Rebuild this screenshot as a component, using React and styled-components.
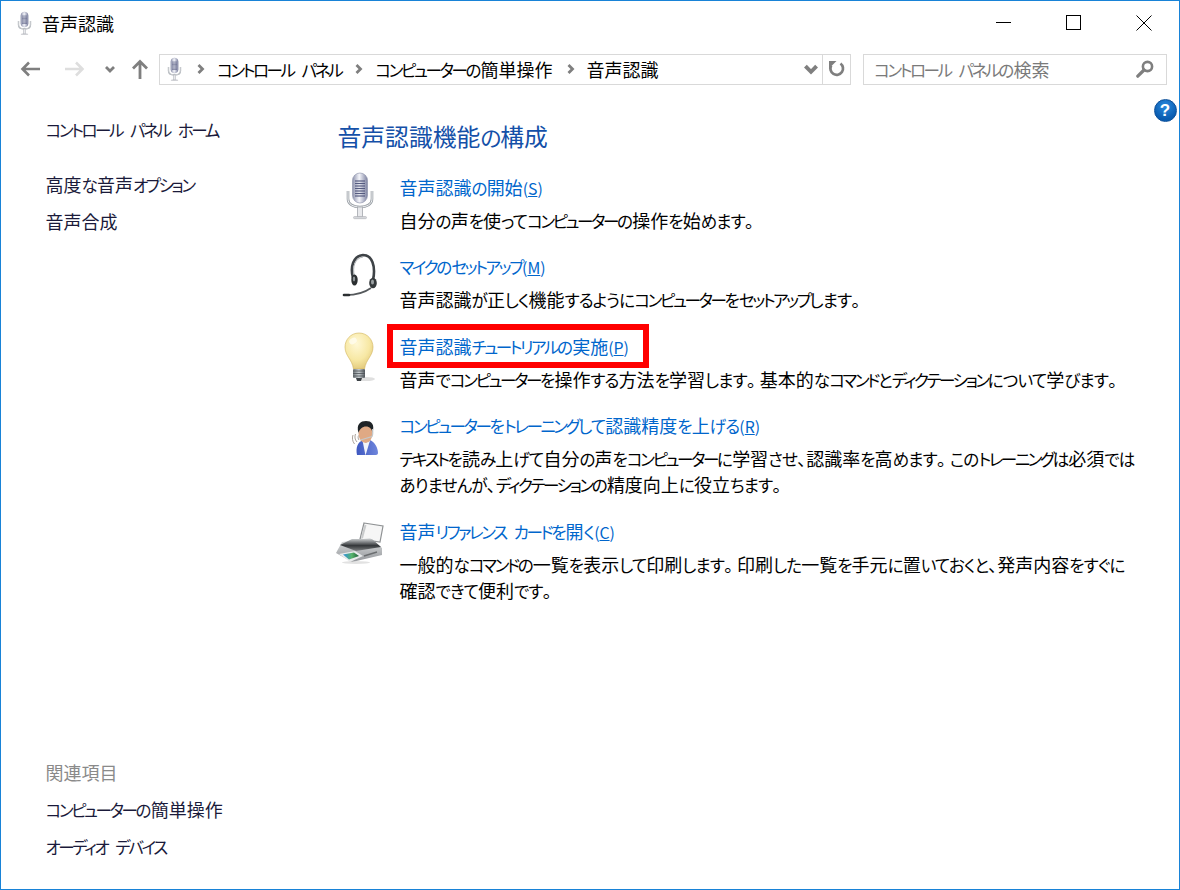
import styled, { createGlobalStyle } from "styled-components";

const GlobalStyle = createGlobalStyle`
  html, body {
    margin: 0;
    height: 100%;
    background: #fff;
  }
  #root {
    height: 100%;
  }
  * {
    box-sizing: border-box;
  }
`;

const Window = styled.div`
  width: 1180px;
  height: 890px;
  border: 1.5px solid #1883d7;
  display: flex;
  flex-direction: column;
  position: relative;
  background: #fff;
  color: #000;
  font-family: "Noto Sans CJK JP", "Noto Sans", sans-serif;
  font-feature-settings: "palt";
  font-size: 18px;
  line-height: 26px;
  overflow: hidden;
`;

/* kana in the reference font are much narrower than the kanji */
const Kana = styled.span`
  font-size: 0.92em;
  line-height: 1;
  letter-spacing: ${(p) => (p.$kata ? "-0.145em" : "-0.05em")};
  word-spacing: 0.4em;
`;

const Stop = styled.span`
  margin-right: 4px;
`;

const Jp = ({ children }) =>
  children.split(/([\u3040-\u309f]+|[\u30a0-\u30ff ]+|。)/).map((run, i) => {
    if (i % 2 === 0) return run;
    if (run === "。") return <Stop key={i}>{run}</Stop>;
    return (
      <Kana key={i} $kata={/[\u30a0-\u30ff]/.test(run)}>
        {run}
      </Kana>
    );
  });

const TitleBar = styled.div`
  height: 44px;
  display: flex;
  align-items: center;
  padding-left: 15px;
  gap: 9px;
`;

const TitleText = styled.div`
  flex: 1;
`;

const WinButtons = styled.div`
  display: flex;
  align-items: center;
`;

const WinButton = styled.button`
  width: 70px;
  height: 44px;
  border: 0;
  padding: 0;
  background: transparent;
  display: flex;
  align-items: center;
  justify-content: center;
`;

const Toolbar = styled.div`
  height: 32px;
  margin-top: 8px;
  display: flex;
  align-items: center;
  padding-left: 18px;
`;

const NavButton = styled.button`
  width: ${(p) => p.$w}px;
  height: 30px;
  margin-left: ${(p) => p.$left || 0}px;
  border: 0;
  padding: 0;
  background: transparent;
  display: flex;
  align-items: center;
  justify-content: center;
`;

const AddressBar = styled.div`
  width: 692px;
  height: 31px;
  margin-left: 2px;
  border: 1.5px solid #d9d9d9;
  display: flex;
  align-items: center;
  padding-left: 6px;
`;

const Crumbs = styled.div`
  flex: 1;
  display: flex;
  align-items: center;
  margin-left: 13px;
`;

const Crumb = styled.span`
  margin: 0 13px 0 11px;
  white-space: nowrap;
`;

const AddressEnd = styled.div`
  width: 28px;
  height: 100%;
  border-left: 1.5px solid #d9d9d9;
  display: flex;
  align-items: center;
  justify-content: center;
`;

const DropButton = styled.div`
  width: 22px;
  display: flex;
  justify-content: center;
`;

const SearchBox = styled.div`
  width: 304px;
  height: 31px;
  margin-left: 12px;
  border: 1.5px solid #d9d9d9;
  display: flex;
  align-items: center;
  justify-content: space-between;
  padding: 0 12px 0 10px;
  color: #7a7a7a;
`;

const HelpBadge = styled.div`
  position: absolute;
  top: 97.5px;
  right: 2.5px;
  width: 23px;
  height: 23px;
  border-radius: 50%;
  background: radial-gradient(circle at 50% 30%, #2a8ade, #0a5cb0 70%);
  border: 1px solid #0b4f9a;
  color: #fff;
  font-family: "Liberation Sans", sans-serif;
  font-weight: 700;
  font-size: 17px;
  line-height: 21px;
  text-align: center;
`;

const Body = styled.div`
  flex: 1;
  display: grid;
  grid-template-columns: 334.5px 1fr;
`;

const Sidebar = styled.nav`
  display: flex;
  flex-direction: column;
  justify-content: space-between;
  padding: 31px 0 30px 44.5px;
`;

const SideGroup = styled.div`
  display: flex;
  flex-direction: column;
  gap: 11px;
`;

const SideHead = styled.div`
  color: #8a8a8a;
`;

const SideLink = styled.div`
  color: #1a1a3a;
  white-space: nowrap;
  margin-bottom: ${(p) => p.$below || 0}px;
`;

const Main = styled.main`
  padding-top: 34px;
`;

const Heading = styled.h1`
  margin: 0 0 20.6px 2px;
  font-size: 23.8px;
  line-height: 34px;
  font-weight: 400;
  color: #1450a8;
`;

const TaskList = styled.div`
  display: flex;
  flex-direction: column;
  gap: 20.5px;
`;

const Task = styled.div`
  display: grid;
  grid-template-columns: 48px 1fr;
  column-gap: 16px;
`;

const IconSlot = styled.svg`
  width: 48px;
  height: 48px;
  margin-top: -3px;
  overflow: visible;
`;

const TaskLink = styled.div`
  position: relative;
  justify-self: start;
  width: fit-content;
  color: #0066cc;
  margin-bottom: 7px;
  white-space: nowrap;

  ${(p) =>
    p.$marked &&
    `
    &::after {
      content: "";
      position: absolute;
      left: -13px;
      right: -20px;
      top: -9px;
      bottom: -9px;
      border: 6px solid #ff0000;
    }
  `}
`;

const AccessKey = styled.span`
  font-size: 0.88em;
  line-height: 1;
`;

const TaskText = styled.div`
  white-space: nowrap;
`;

const GRAY = "#7f7f7f";

const Defs = () => (
  <svg width="0" height="0" style={{ position: "absolute" }}>
    <defs>
      <linearGradient id="micBody" x1="0" x2="1" y1="0" y2="0">
        <stop offset="0" stopColor="#8d92ad" />
        <stop offset="0.45" stopColor="#f4f5fa" />
        <stop offset="1" stopColor="#7c81a0" />
      </linearGradient>
      <radialGradient id="bulbGlass" cx="0.42" cy="0.3" r="0.75">
        <stop offset="0" stopColor="#fff8d6" />
        <stop offset="0.6" stopColor="#f7e8a4" />
        <stop offset="1" stopColor="#e0c678" />
      </radialGradient>
      <linearGradient id="bulbBase" x1="0" x2="1" y1="0" y2="0">
        <stop offset="0" stopColor="#6d7478" />
        <stop offset="0.5" stopColor="#c9cfd2" />
        <stop offset="1" stopColor="#555b60" />
      </linearGradient>
      <linearGradient id="shirt" x1="0" x2="1" y1="0" y2="0">
        <stop offset="0" stopColor="#3f58c0" />
        <stop offset="1" stopColor="#6f86dc" />
      </linearGradient>
      <linearGradient id="printerTop" x1="0" x2="0" y1="0" y2="1">
        <stop offset="0" stopColor="#c4c7c9" />
        <stop offset="0.55" stopColor="#34373a" />
        <stop offset="1" stopColor="#7d8082" />
      </linearGradient>
      <linearGradient id="printerBase" x1="0" x2="0" y1="0" y2="1">
        <stop offset="0" stopColor="#dfe1e2" />
        <stop offset="1" stopColor="#93969a" />
      </linearGradient>
      <linearGradient id="photo" x1="0" x2="1" y1="0" y2="0">
        <stop offset="0" stopColor="#2f8fe0" />
        <stop offset="0.55" stopColor="#58b56a" />
        <stop offset="1" stopColor="#1d5a3a" />
      </linearGradient>
    </defs>
  </svg>
);

const MicShape = () => (
  <>
    <path d="M12 20v8c0 5 5 8 12 8s12-3 12-8v-8" fill="none" stroke="#9aa0a6" strokeWidth="2.6" />
    <path d="M12 20v8c0 5 5 8 12 8s12-3 12-8v-8" fill="none" stroke="#f2f3f5" strokeWidth="1" />
    <rect x="16.5" y="2" width="15" height="30" rx="7.5" fill="url(#micBody)" stroke="#8a8fa8" strokeWidth="0.6" />
    {[10, 12.5, 15, 17.5, 20, 22.5, 25].map((y) => (
      <path key={y} d={`M19 ${y}h10`} stroke="#555b80" strokeWidth="1.2" />
    ))}
    <rect x="21.5" y="36" width="5" height="10" fill="#e8e9ec" stroke="#a4a7ad" strokeWidth="0.8" />
    <rect x="17.5" y="45.5" width="13" height="2.2" rx="1" fill="#d4d6da" stroke="#a4a7ad" strokeWidth="0.5" />
  </>
);

const MicIcon = () => (
  <IconSlot viewBox="0 0 48 48">
    <MicShape />
  </IconSlot>
);

const SmallMic = () => (
  <svg width="17" height="24" viewBox="9 0 30 48">
    <MicShape />
  </svg>
);

const HeadsetIcon = () => (
  <IconSlot viewBox="0 0 48 48">
    <path d="M17 28C14 17 17 6 27 5c9 0 13 11 10 25" fill="none" stroke="#3e4347" strokeWidth="2.6" />
    <path d="M18.5 26C16 17 19 8 27 7" fill="none" stroke="#9ca1a4" strokeWidth="0.8" />
    <ellipse cx="18.5" cy="30" rx="3.2" ry="5.5" fill="#2b2f31" />
    <ellipse cx="18" cy="29" rx="1.2" ry="2.4" fill="#8e9497" />
    <ellipse cx="37" cy="33" rx="3.8" ry="5.2" fill="#34393b" />
    <ellipse cx="36.5" cy="32" rx="1.5" ry="2.6" fill="#9ba1a3" />
    <path d="M35 38C28 43 19 45 10 45" fill="none" stroke="#55595c" strokeWidth="1.6" />
    <path d="M13 45h-5" stroke="#2b2f31" strokeWidth="2.6" strokeLinecap="round" />
  </IconSlot>
);

const BulbIcon = () => (
  <IconSlot viewBox="0 0 48 48">
    <ellipse cx="30" cy="49" rx="9" ry="2" fill="#c9c9c9" opacity="0.6" />
    <path
      d="M23 3C14.5 3 9 10 9 17c0 9 7 12 8.5 22h11C30 29 37 26 37 17 37 10 31.5 3 23 3z"
      fill="url(#bulbGlass)"
      stroke="#d1b35a"
      strokeWidth="0.6"
    />
    <ellipse cx="17" cy="11" rx="4" ry="3" fill="#fffdf0" opacity="0.8" transform="rotate(-30 17 11)" />
    <rect x="17" y="39" width="12" height="9" rx="1" fill="url(#bulbBase)" />
    {[41, 43.5, 46].map((y) => (
      <path key={y} d={`M17 ${y}h12`} stroke="#4b5156" strokeWidth="0.8" />
    ))}
    <path d="M20 48h6l-1 3h-4z" fill="#3d4246" />
  </IconSlot>
);

const PersonIcon = () => (
  <IconSlot viewBox="0 0 48 48">
    <path d="M21 46c-1.5-8 1-13 6-15l3 1 4-1c5 2 8 8 8 13 0 1-1 2-2 2z" fill="url(#shirt)" />
    <path d="M26.5 31.5l3 15 4.5-15-4 2z" fill="#f2f4fa" />
    <ellipse cx="29.5" cy="24.5" rx="7" ry="9.5" fill="#dfa984" />
    <path d="M22.5 24c-2.5-9 2-12 7.5-12s9 3 6.5 12c-.5-4-3-6.500-6.500-6.500s-6.500 2.500-7.500 6.500z" fill="#1f2427" />
    <path d="M36.5 20c.5 4 .3 6-.5 7.500L24.5 31" fill="none" stroke="#c4c8ca" strokeWidth="1.2" />
    <path d="M19.5 25c-1 2.500-.8 5.500 1.500 8M17 26c-1 2.500-.8 6 1.500 9M22.5 26.500c-.6 1.500-.5 3.200.5 4.500" fill="none" stroke="#a3988f" strokeWidth="0.9" />
  </IconSlot>
);

const PrinterIcon = () => (
  <IconSlot viewBox="0 0 48 48">
    <path d="M28 8l19 3-3 16-20-3z" fill="#f6f6f6" stroke="#8f9294" strokeWidth="1.2" />
    <path d="M29.5 10l-3.500 13" stroke="#c9cbcc" strokeWidth="2" />
    <path d="M6 27l28-4 12 10v7L16 47 0 38z" fill="url(#printerBase)" />
    <path d="M4 30l12-6 20 0 9 8-25 4z" fill="url(#printerTop)" />
    <path d="M3 39l16-3 8 5-13 6z" fill="#e9ebec" />
    <path d="M7 39.5l11-2 5 3.500-10 3.500z" fill="url(#photo)" />
    <path d="M28 41l13-4" stroke="#6b6e70" strokeWidth="1.4" />
    <ellipse cx="20" cy="47.5" rx="14" ry="1.4" fill="#cfcfcf" opacity="0.6" />
  </IconSlot>
);

const Chevron = ({ dir = "right", color = GRAY, size = 10 }) => (
  <svg width={size} height={size} viewBox="0 0 10 10">
    <path
      d={dir === "right" ? "M2.5 1l4 4-4 4" : "M1 3l4 4 4-4"}
      fill="none"
      stroke={color}
      strokeWidth="2.8"
    />
  </svg>
);

const ArrowLeft = ({ color = GRAY }) => (
  <svg width="20" height="16" viewBox="0 0 20 16">
    <path d="M20 8H3M9 1.5L2.5 8 9 14.5" fill="none" stroke={color} strokeWidth="2.6" />
  </svg>
);

const ArrowRight = ({ color = GRAY }) => (
  <svg width="20" height="16" viewBox="0 0 20 16">
    <path d="M0 8h17M11 1.5L17.5 8 11 14.5" fill="none" stroke={color} strokeWidth="2.6" />
  </svg>
);

const ArrowUp = ({ color = GRAY }) => (
  <svg width="18" height="20" viewBox="0 0 18 20">
    <path d="M9 20V3M2 9.5L9 2.5l7 7" fill="none" stroke={color} strokeWidth="2.8" />
  </svg>
);

const RefreshIcon = () => (
  <svg width="17" height="18" viewBox="0 0 17 18">
    <path d="M12.5 3.5a6.300 6.300 0 1 1-9.300 2" fill="none" stroke={GRAY} strokeWidth="2.7" />
    <path d="M1 1h7.500L1 8.500z" fill={GRAY} />
  </svg>
);

const SearchIcon = () => (
  <svg width="18" height="18" viewBox="0 0 18 18">
    <circle cx="11.5" cy="6.5" r="4.6" fill="none" stroke={GRAY} strokeWidth="2.6" />
    <path d="M8 10L1.8 16.2" stroke={GRAY} strokeWidth="3.2" strokeLinecap="round" />
  </svg>
);

const tasks = [
  {
    icon: <MicIcon />,
    link: "音声認識の開始",
    key: "S",
    text: ["自分の声を使ってコンピューターの操作を始めます。"],
  },
  {
    icon: <HeadsetIcon />,
    link: "マイクのセットアップ",
    key: "M",
    text: ["音声認識が正しく機能するようにコンピューターをセットアップします。"],
  },
  {
    icon: <BulbIcon />,
    link: "音声認識チュートリアルの実施",
    key: "P",
    marked: true,
    text: ["音声でコンピューターを操作する方法を学習します。基本的なコマンドとディクテーションについて学びます。"],
  },
  {
    icon: <PersonIcon />,
    link: "コンピューターをトレーニングして認識精度を上げる",
    key: "R",
    text: [
      "テキストを読み上げて自分の声をコンピューターに学習させ、認識率を高めます。このトレーニングは必須では",
      "ありませんが、ディクテーションの精度向上に役立ちます。",
    ],
  },
  {
    icon: <PrinterIcon />,
    link: "音声リファレンス カードを開く",
    key: "C",
    text: [
      "一般的なコマンドの一覧を表示して印刷します。印刷した一覧を手元に置いておくと、発声内容をすぐに",
      "確認できて便利です。",
    ],
  },
];

const App = () => {
  return (
    <Window>
      <GlobalStyle />
      <Defs />
      <TitleBar>
        <SmallMic />
        <TitleText>音声認識</TitleText>
        <WinButtons>
          <WinButton>
            <svg width="16" height="16" viewBox="0 0 16 16">
              <path d="M0 7.5h15" stroke="#000" strokeWidth="1" />
            </svg>
          </WinButton>
          <WinButton>
            <svg width="16" height="16" viewBox="0 0 16 16">
              <rect x="0.5" y="0.5" width="14" height="14" fill="none" stroke="#000" />
            </svg>
          </WinButton>
          <WinButton>
            <svg width="16" height="16" viewBox="0 0 16 16">
              <path d="M0.5 0.5l15 15M15.5 0.5l-15 15" stroke="#000" strokeWidth="1" />
            </svg>
          </WinButton>
        </WinButtons>
      </TitleBar>
      <Toolbar>
        <NavButton $w={22}>
          <ArrowLeft />
        </NavButton>
        <NavButton $w={24} $left={22}>
          <ArrowRight color="#dedede" />
        </NavButton>
        <NavButton $w={18} $left={14}>
          <Chevron dir="down" />
        </NavButton>
        <NavButton $w={34} $left={4}>
          <ArrowUp />
        </NavButton>
        <AddressBar>
          <SmallMic />
          <Crumbs>
            <Chevron />
            <Crumb><Jp>コントロール パネル</Jp></Crumb>
            <Chevron />
            <Crumb><Jp>コンピューターの簡単操作</Jp></Crumb>
            <Chevron />
            <Crumb>音声認識</Crumb>
          </Crumbs>
          <DropButton>
            <Chevron dir="down" size={14} />
          </DropButton>
          <AddressEnd>
            <RefreshIcon />
          </AddressEnd>
        </AddressBar>
        <SearchBox>
          <span><Jp>コントロール パネルの検索</Jp></span>
          <SearchIcon />
        </SearchBox>
      </Toolbar>
      <HelpBadge>?</HelpBadge>
      <Body>
        <Sidebar>
          <SideGroup>
            <SideLink $below={18}><Jp>コントロール パネル ホーム</Jp></SideLink>
            <SideLink><Jp>高度な音声オプション</Jp></SideLink>
            <SideLink>音声合成</SideLink>
          </SideGroup>
          <SideGroup>
            <SideHead>関連項目</SideHead>
            <SideLink><Jp>コンピューターの簡単操作</Jp></SideLink>
            <SideLink><Jp>オーディオ デバイス</Jp></SideLink>
          </SideGroup>
        </Sidebar>
        <Main>
          <Heading><Jp>音声認識機能の構成</Jp></Heading>
          <TaskList>
            {tasks.map((t) => (
              <Task key={t.key}>
                {t.icon}
                <div>
                  <TaskLink $marked={t.marked}>
                    <Jp>{t.link}</Jp>
                    <AccessKey>
                      (<u>{t.key}</u>)
                    </AccessKey>
                  </TaskLink>
                  {t.text.map((line) => (
                    <TaskText key={line}><Jp>{line}</Jp></TaskText>
                  ))}
                </div>
              </Task>
            ))}
          </TaskList>
        </Main>
      </Body>
    </Window>
  );
};

export default App;
